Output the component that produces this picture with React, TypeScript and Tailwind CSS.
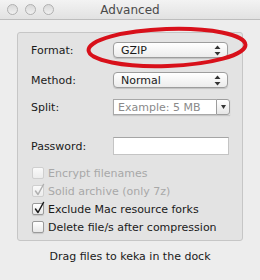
import React from "react";

const font = { fontFamily: '"DejaVu Sans", "Liberation Sans", sans-serif' };

function UpDown() {
  return (
    <svg width="7" height="11" viewBox="0 0 7 11" className="shrink-0">
      <path d="M3.5 0.5 L6.5 4 L0.5 4 Z" fill="#333" />
      <path d="M3.5 10.5 L6.5 7 L0.5 7 Z" fill="#333" />
    </svg>
  );
}

function Popup({ label }: { label: string }) {
  return (
    <div className="w-[115px] h-[16px] rounded-[4px] border border-[#9d9d9d] bg-gradient-to-b from-[#ffffff] to-[#ececec] shadow-[0_1px_1px_rgba(0,0,0,0.15)] flex items-center justify-between pl-[7px] pr-[6px]">
      <span className="text-[11px] leading-none text-[#1a1a1a]">{label}</span>
      <UpDown />
    </div>
  );
}

function Check({ checked, disabled }: { checked?: boolean; disabled?: boolean }) {
  return (
    <div className="relative w-[12px] h-[12px] shrink-0">
      <div
        className={
          disabled
            ? "w-[12px] h-[12px] rounded-[2px] border border-[#cfcfcf] bg-gradient-to-b from-[#fafafa] to-[#ececec]"
            : "w-[12px] h-[12px] rounded-[2px] border border-[#9a9a9a] bg-gradient-to-b from-[#ffffff] to-[#e8e8e8] shadow-[0_1px_1px_rgba(0,0,0,0.12)]"
        }
      />
      {checked && (
        <svg width="13" height="14" viewBox="0 0 13 14" className="absolute left-[1px] top-[-2px]">
          <path
            d="M2.5 8 L5 11.5 L10.5 1.5"
            fill="none"
            stroke={disabled ? "#b0b0b0" : "#1a1a1a"}
            strokeWidth="1.5"
            strokeLinecap="round"
            strokeLinejoin="round"
          />
        </svg>
      )}
    </div>
  );
}

function CheckRow({ label, checked, disabled }: { label: string; checked?: boolean; disabled?: boolean }) {
  return (
    <div className="h-[18px] flex items-center gap-[4px]">
      <Check checked={checked} disabled={disabled} />
      <span className={"text-[11px] leading-none " + (disabled ? "text-[#a8a8a8]" : "text-[#1a1a1a]")}>{label}</span>
    </div>
  );
}

export default function App() {
  return (
    <div className="relative w-[260px] h-[280px] bg-[#ededed] overflow-hidden" style={font}>
      {/* title bar */}
      <div className="h-[20px] border-b border-[#bdbdbd] bg-gradient-to-b from-[#f3f3f3] to-[#e2e2e2] relative flex items-center justify-center">
        <div className="absolute left-[7px] top-[4px] flex gap-[7px]">
          {[0, 1, 2].map((i) => (
            <div
              key={i}
              className="w-[11px] h-[11px] rounded-full border border-[#b0b0b0] bg-gradient-to-b from-[#d9d9d9] to-[#f0f0f0]"
            />
          ))}
        </div>
        <span className="text-[12px] text-[#4a4a4a] leading-none">Advanced</span>
      </div>

      {/* group box */}
      <div className="mt-[12px] mx-[17px] h-[209px] rounded-[3px] border border-[#c6c6c6] bg-[#e3e3e3] pl-[13px] pt-[9px]">
        <div className="flex items-center h-[16px]">
          <span className="w-[82px] text-[11px] text-[#1a1a1a] leading-none">Format:</span>
          <Popup label="GZIP" />
        </div>
        <div className="flex items-center h-[16px] mt-[14px]">
          <span className="w-[82px] text-[11px] text-[#1a1a1a] leading-none">Method:</span>
          <Popup label="Normal" />
        </div>
        <div className="flex items-center h-[16px] mt-[11px]">
          <span className="w-[82px] text-[11px] text-[#1a1a1a] leading-none">Split:</span>
          <div className="w-[117px] h-[16px] flex shadow-[0_1px_1px_rgba(0,0,0,0.12)]">
            <div className="flex-1 h-full bg-white border border-[#a8a8a8] border-r-0 flex items-center pl-[4px]">
              <span className="text-[11px] leading-none text-[#8a8a8a]">Example: 5 MB</span>
            </div>
            <div className="w-[14px] h-full rounded-r-[3px] border border-[#9d9d9d] bg-gradient-to-b from-[#ffffff] to-[#e6e6e6] flex items-center justify-center">
              <svg width="5" height="4" viewBox="0 0 5 4">
                <path d="M0 0 L5 0 L2.5 4 Z" fill="#333" />
              </svg>
            </div>
          </div>
        </div>
        <div className="flex items-center h-[18px] mt-[22px]">
          <span className="w-[82px] text-[11px] text-[#1a1a1a] leading-none">Password:</span>
          <div className="w-[116px] h-[18px] bg-white border border-[#c4c4c4] border-t-[#a5a5a5]" />
        </div>
        <div className="mt-[9px] pl-[1px]">
          <CheckRow label="Encrypt filenames" disabled />
          <CheckRow label="Solid archive (only 7z)" checked disabled />
          <CheckRow label="Exclude Mac resource forks" checked />
          <CheckRow label="Delete file/s after compression" />
        </div>
      </div>

      <div className="mt-[7px] h-[16px] flex items-center justify-center">
        <span className="text-[11px] leading-none text-[#1a1a1a]">Drag files to keka in the dock</span>
      </div>

      {/* red annotation ellipse */}
      <svg width="260" height="280" className="absolute left-0 top-0 pointer-events-none">
        <ellipse
          cx="167"
          cy="47.5"
          rx="78.5"
          ry="18.5"
          fill="none"
          stroke="#d8101a"
          strokeWidth="4"
          transform="rotate(-2 167 47.5)"
        />
      </svg>
    </div>
  );
}
